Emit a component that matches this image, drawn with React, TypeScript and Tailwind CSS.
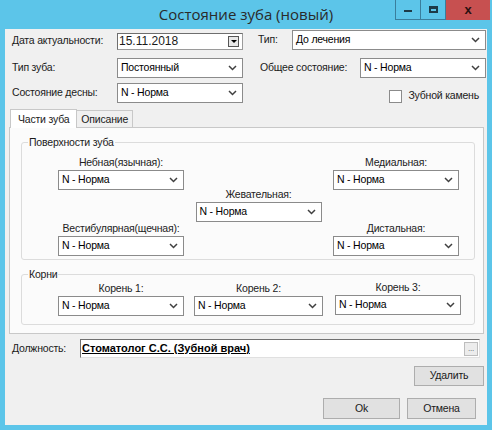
const font = { fontFamily: '"Liberation Sans", Arial, sans-serif' };

function Chevron() {
  return (
    <svg width="9" height="6" viewBox="0 0 9 6" className="shrink-0">
      <polyline points="1,1 4.5,4.5 8,1" fill="none" stroke="#404040" strokeWidth="1.5" />
    </svg>
  );
}

function Select({ value, w }: { value: string; w: string }) {
  return (
    <div className={`${w} h-[20px] flex items-center justify-between bg-white border border-[#8b8b8b] pl-[3px] pr-[5px] text-black`}>
      <span>{value}</span>
      <Chevron />
    </div>
  );
}

function Field({ label, w }: { label: string; w: string }) {
  return (
    <div className="flex flex-col items-center">
      <div className="text-[#222] leading-[13px] mb-[1px] whitespace-nowrap">{label}</div>
      <Select value="N - Норма" w={w} />
    </div>
  );
}

export default function App() {
  return (
    <div className="w-[492px] h-[430px] bg-[#5cc5e9] flex flex-col" style={font}>
      {/* title bar */}
      <div className="relative h-[29px] shrink-0">
        <div className="text-center text-[15px] leading-[29px] text-[#2a2a2a]" style={{ fontFamily: '"Open Sans", "Liberation Sans", sans-serif' }}>
          Состояние зуба (новый)
        </div>
        <div className="absolute top-0 right-[2px] flex h-[20px]">
          <div className="w-[26px] border border-[#3a7e9c] border-t-0 flex items-center justify-center">
            <div className="w-[8px] h-[2px] bg-[#1d3b48] mt-[3px]" />
          </div>
          <div className="w-[25px] border-b border-r border-[#3a7e9c] flex items-center justify-center">
            <div className="w-[9px] h-[7px] border-2 border-[#1d3b48] border-t-[3px]" />
          </div>
          <div className="w-[44px] bg-[#c75050] flex items-center justify-center text-[13px] font-bold text-[#2a1010]">x</div>
        </div>
      </div>

      {/* client */}
      <div className="mx-[5px] h-[396px] bg-[#f0f0f0] text-[10.5px] tracking-[-0.2px] text-[#1a1a1a] flex flex-col whitespace-nowrap">
        {/* top rows */}
        <div className="flex">
          <div className="w-[250px] flex flex-col">
            <div className="flex items-center h-[22px] pt-[2px]">
              <span className="w-[112px] pl-[7px]">Дата актуальности:</span>
              <div className="w-[126px] h-[17px] flex items-center justify-between bg-white border border-[#9a9a9a] border-t-[#6e6e6e] border-l-[#6e6e6e] pl-[1px] pr-[3px]">
                <span className="text-[12px] tracking-normal leading-none">15.11.2018</span>
                <div className="w-[11px] h-[11px] border border-[#555] bg-[#e8e8e8] flex items-center justify-center">
                  <div className="w-0 h-0 border-l-[3px] border-r-[3px] border-t-[3px] border-l-transparent border-r-transparent border-t-black" />
                </div>
              </div>
            </div>
            <div className="flex items-center h-[20px] mt-[7px]">
              <span className="w-[112px] pl-[7px]">Тип зуба:</span>
              <Select value="Постоянный" w="w-[126px]" />
            </div>
            <div className="flex items-center h-[20px] mt-[5px]">
              <span className="w-[112px] pl-[7px]">Состояние десны:</span>
              <Select value="N - Норма" w="w-[126px]" />
            </div>
          </div>
          <div className="flex-1 flex flex-col">
            <div className="flex items-center h-[20px] mt-[1px]">
              <span className="w-[37px] pl-[3px]">Тип:</span>
              <Select value="До лечения" w="w-[194px]" />
            </div>
            <div className="flex items-center h-[20px] mt-[8px]">
              <span className="w-[105px] pl-[5px]">Общее состояние:</span>
              <Select value="N - Норма" w="w-[126px]" />
            </div>
            <div className="flex items-center justify-end h-[14px] mt-[11px] pr-[8px]">
              <div className="w-[13px] h-[13px] border border-[#8b8b8b] bg-white mr-[6px]" />
              <span>Зубной камень</span>
            </div>
          </div>
        </div>

        {/* tabs */}
        <div className="flex ml-[5px] mt-[5px] h-[19px]">
          <div className="px-[7px] h-[19px] bg-white border border-b-0 border-[#c8c8c8] leading-[18px] relative top-[1px]">Части зуба</div>
          <div className="px-[4px] h-[17px] mt-[2px] bg-[#f0f0f0] border border-b-0 border-l-0 border-[#c8c8c8] leading-[16px]">Описание</div>
        </div>

        {/* panel */}
        <div className="ml-[4px] w-[475px] h-[207px] bg-[#fbfbfb] border border-[#c8c8c8] flex flex-col pl-[11px] pr-[8px]">
          <div className="relative mt-[14px] h-[118px] border border-[#dcdcdc] rounded-[3px]">
            <span className="absolute -top-[7px] left-[6px] px-[1px] bg-[#fbfbfb] leading-[13px]">Поверхности зуба</span>
            <div className="flex justify-between pl-[36px] pr-[15px] pt-[13px]">
              <div className="flex flex-col">
                <Field label="Небная(язычная):" w="w-[126px]" />
                <div className="mt-[32px]">
                  <Field label="Вестибулярная(щечная):" w="w-[126px]" />
                </div>
              </div>
              <div className="pt-[32px]">
                <Field label="Жевательная:" w="w-[126px]" />
              </div>
              <div className="flex flex-col">
                <Field label="Медиальная:" w="w-[126px]" />
                <div className="mt-[32px]">
                  <Field label="Дистальная:" w="w-[126px]" />
                </div>
              </div>
            </div>
          </div>
          <div className="relative mt-[14px] h-[51px] border border-[#dcdcdc] rounded-[3px]">
            <span className="absolute -top-[7px] left-[6px] px-[1px] bg-[#fbfbfb] leading-[13px]">Корни</span>
            <div className="flex pl-[36px] pt-[7px] gap-[10px]">
              <Field label="Корень 1:" w="w-[126px]" />
              <Field label="Корень 2:" w="w-[129px]" />
              <div className="ml-[2px] -mt-[1px]">
                <Field label="Корень 3:" w="w-[126px]" />
              </div>
            </div>
          </div>
        </div>

        {/* Должность */}
        <div className="flex items-center mt-[5px] h-[19px]">
          <span className="w-[75px] pl-[7px]">Должность:</span>
          <div className="w-[400px] h-[19px] flex items-center justify-between bg-white border border-[#e0e0e0] border-t-[#707070] border-l-[#707070] pl-[1px] pr-[1px]">
            <span className="font-bold underline text-[11px] tracking-normal text-black leading-none">Стоматолог С.С. (Зубной врач)</span>
            <div className="w-[14px] h-[14px] bg-[#ececec] border border-[#bdbdbd] text-[8px] leading-[8px] text-[#555] flex items-end justify-center pb-[2px]">...</div>
          </div>
        </div>

        <div className="flex justify-end mt-[8px] pr-[3px]">
          <div className="w-[70px] h-[20px] bg-[#e1e1e1] border border-[#adadad] flex items-center justify-center">Удалить</div>
        </div>

        <div className="flex justify-end mt-[12px] pr-[11px] gap-[7px]">
          <div className="w-[77px] h-[21px] bg-[#e1e1e1] border border-[#adadad] flex items-center justify-center">Ok</div>
          <div className="w-[69px] h-[21px] bg-[#e1e1e1] border border-[#adadad] flex items-center justify-center">Отмена</div>
        </div>
      </div>
    </div>
  );
}
